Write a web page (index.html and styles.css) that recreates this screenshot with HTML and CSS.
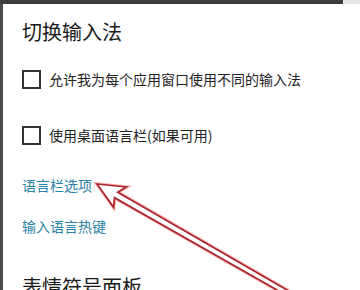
FILE: index.html
```html
<!DOCTYPE html>
<html lang="zh-CN">
<head>
<meta charset="utf-8">
<link rel="stylesheet" href="styles.css">
</head>
<body>
<div class="topbar"><div class="topbar-dark"></div><div class="topbar-light"></div></div>
<div class="frame">
  <div class="panel">
    <h1 class="title">切换输入法</h1>
    <label class="check-row row1"><span class="box"></span><span class="check-text">允许我为每个应用窗口使用不同的输入法</span></label>
    <label class="check-row row2"><span class="box"></span><span class="check-text">使用桌面语言栏(如果可用)</span></label>
    <a class="link link1">语言栏选项</a>
    <a class="link link2">输入语言热键</a>
    <h2 class="title title2">表情符号面板</h2>
  </div>
  <svg class="arrow" width="360" height="290" viewBox="0 0 360 290">
    <g transform="translate(97 184) rotate(29.8)">
      <polygon points="0,0 27,-12 22,-3.2 235,-2.4 235,2.4 22,3.2 26,12" fill="none" stroke="#ff5a5a" stroke-opacity="0.45" stroke-width="3.6" stroke-linejoin="miter"/>
      <polygon points="0,0 27,-12 22,-3.2 235,-2.4 235,2.4 22,3.2 26,12" fill="#fff" stroke="#a8242a" stroke-width="1.7" stroke-linejoin="miter"/>
    </g>
  </svg>
</div>
</body>
</html>
```
FILE: styles.css
```css
html, body {
  margin: 0;
  padding: 0;
  background: #fff;
  width: 360px;
  height: 290px;
  overflow: hidden;
}
body {
  font-family: "Noto Sans CJK SC", "Noto Sans", sans-serif;
  color: #1e1e1e;
}
.topbar {
  display: flex;
  height: 4px;
}
.topbar-dark {
  flex: 1;
  background: #3c3c3c;
}
.topbar-light {
  width: 17px;
  background: #e6e6e6;
}
.frame {
  position: relative;
  height: 286px;
  border-left: 3px solid #4a4a4a;
  box-sizing: border-box;
}
.panel {
  display: flex;
  flex-direction: column;
  align-items: flex-start;
  padding-left: 19px;
  padding-top: 14px;
}
.title {
  margin: 0;
  font-size: 20px;
  font-weight: 400;
  line-height: 28px;
  color: #1a1a1a;
}
.check-row {
  display: flex;
  align-items: center;
  height: 20px;
  font-size: 14px;
  line-height: 20px;
  color: #222;
}
.row1 { margin-top: 23px; }
.row2 { margin-top: 36px; }
.box {
  width: 19px;
  height: 19px;
  border: 2px solid #333;
  box-sizing: border-box;
  flex: none;
}
.check-text {
  margin-left: 8px;
}
.link {
  font-size: 14px;
  line-height: 20px;
  color: #2a82a4;
}
.link1 { margin-top: 30px; }
.link2 { margin-top: 21px; }
.title2 { margin-top: 37px; }
.arrow {
  position: absolute;
  left: -3px;
  top: -4px;
}
```
